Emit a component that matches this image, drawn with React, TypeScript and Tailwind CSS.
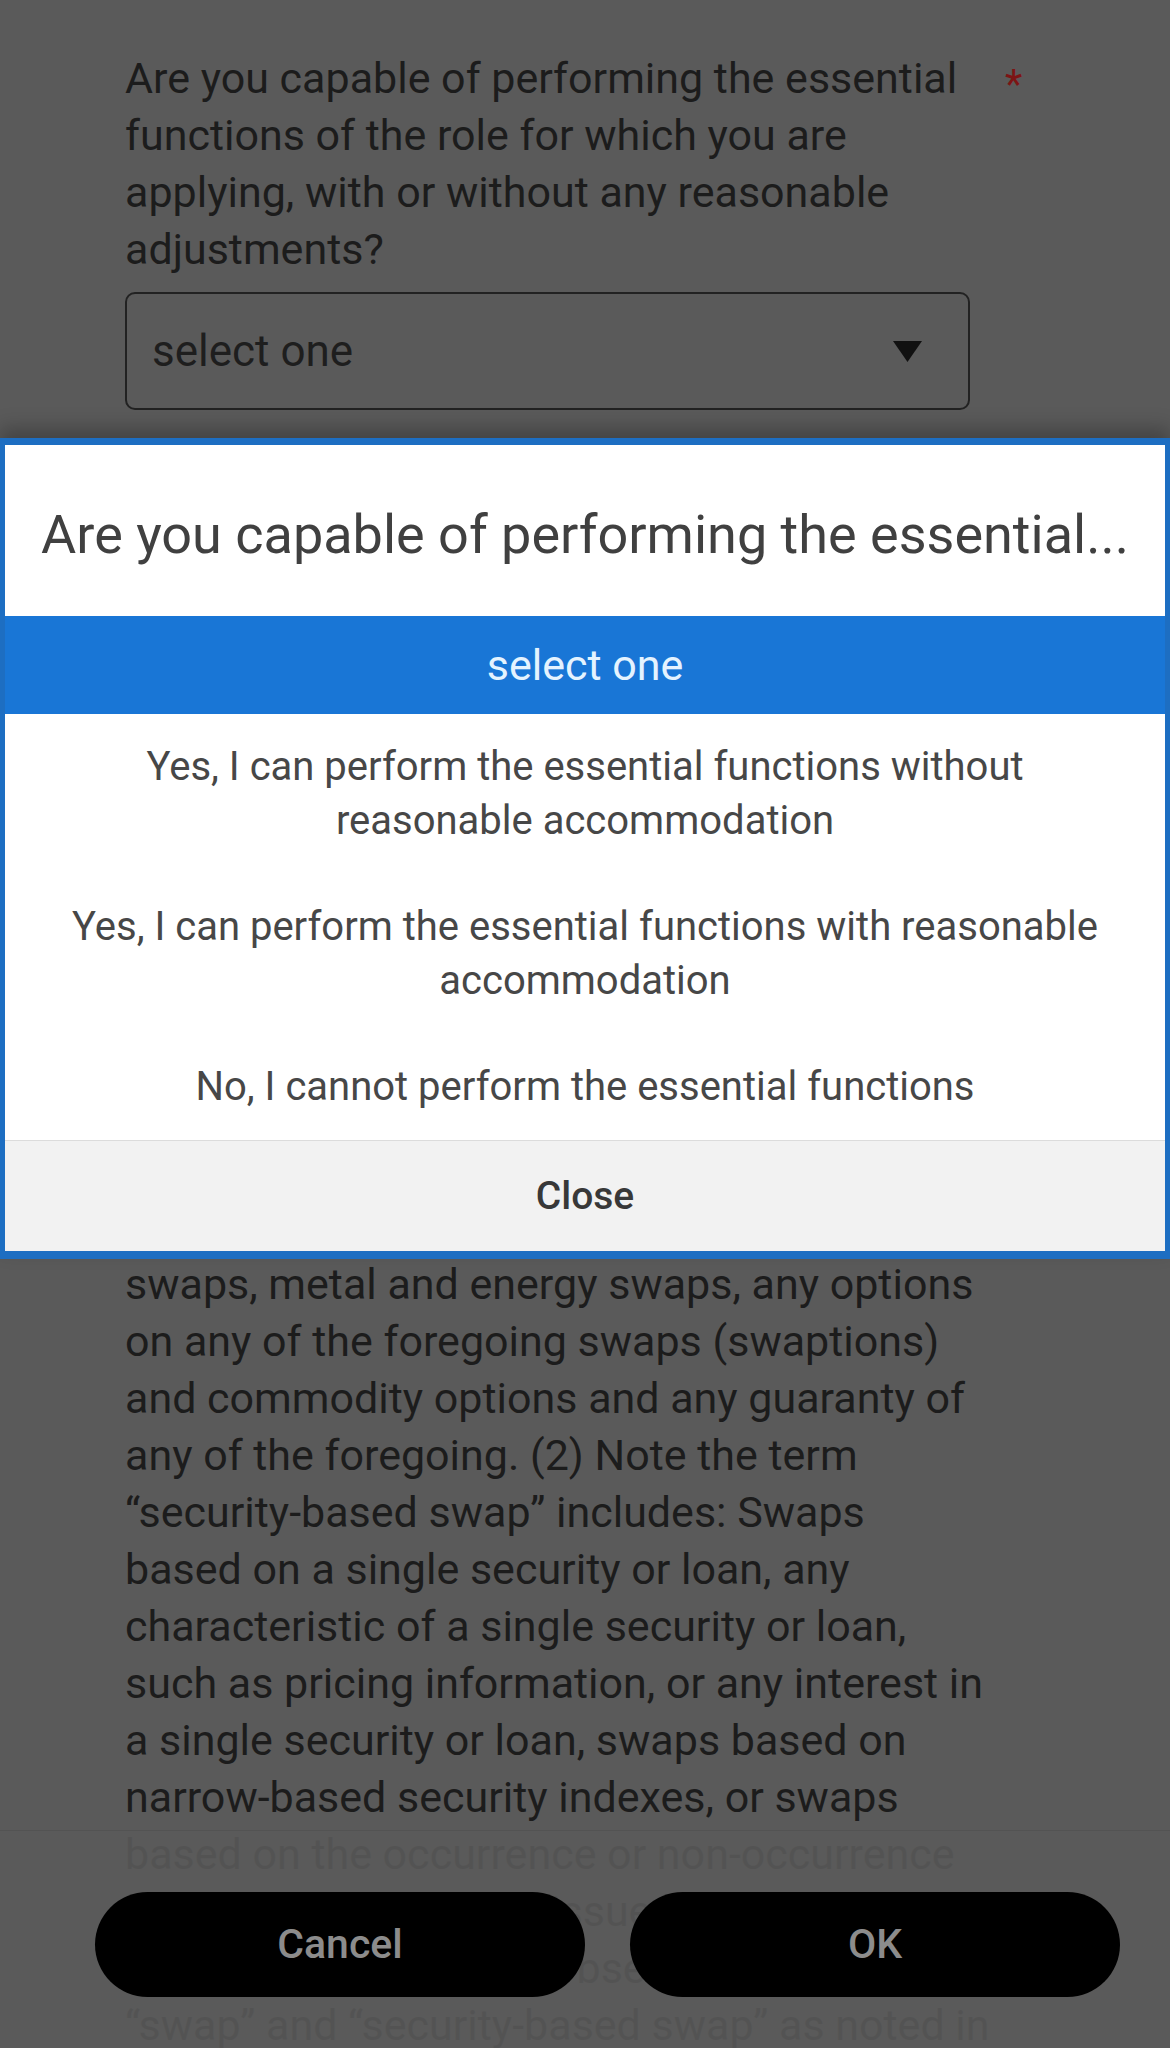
import React from 'react'

const questionLines = [
  'Are you capable of performing the essential',
  'functions of the role for which you are',
  'applying, with or without any reasonable',
  'adjustments?',
]

const bodyLines = [
  'swaps, metal and energy swaps, any options',
  'on any of the foregoing swaps (swaptions)',
  'and commodity options and any guaranty of',
  'any of the foregoing. (2) Note the term',
  '\u201csecurity-based swap\u201d includes: Swaps',
  'based on a single security or loan, any',
  'characteristic of a single security or loan,',
  'such as pricing information, or any interest in',
  'a single security or loan, swaps based on',
  'narrow-based security indexes, or swaps',
  'based on the occurrence or non-occurrence',
  'of an event relating to issuers of securities',
  'in narrow indexes. (3) Observe that both',
  '\u201cswap\u201d and \u201csecurity-based swap\u201d as noted in',
]

const options = [
  ['Yes, I can perform the essential functions without', 'reasonable accommodation'],
  ['Yes, I can perform the essential functions with reasonable', 'accommodation'],
  ['No, I cannot perform the essential functions'],
]

function PickerDialog() {
  return (
    <div className="absolute left-0 right-0 top-[438px] border-x-[5px] border-t-[7px] border-b-[8px] border-[#1d6ec2] bg-white shadow-[0_-10px_18px_rgba(0,0,0,0.25)]">
      <div className="h-[171px] flex items-center justify-center px-4 pt-[8px]">
        <p className="whitespace-nowrap text-[54px] text-[#404040]">
          Are you capable of performing the essential...
        </p>
      </div>
      <div className="h-[98px] flex items-center justify-center bg-[#1976d6]">
        <span className="text-[43px] text-[#e4f3ff]">select one</span>
      </div>
      {options.map((opt, i) => (
        <div key={i} className="py-[26px] flex flex-col items-center text-center text-[40px] leading-[54px] text-[#474747]">
          {opt.map((line) => (
            <span key={line} className="whitespace-nowrap">{line}</span>
          ))}
        </div>
      ))}
      <div className="h-[111px] border-t border-[#dcdcdc] bg-[#f2f2f2] flex items-center justify-center">
        <span className="text-[39px] font-medium text-[#383838]">Close</span>
      </div>
    </div>
  )
}

export default function App() {
  return (
    <div className="relative h-[2048px] overflow-hidden bg-[#5a5a5a] font-['Roboto',sans-serif] text-[#1c1c1c]">
      <div className="pl-[125px] pt-[50px]">
        <div className="flex items-start gap-[10px]">
          <div className="w-[870px] text-[43px] leading-[57px]">
            {questionLines.map((line) => (
              <div key={line} className="whitespace-nowrap">{line}</div>
            ))}
          </div>
          <span className="pt-[6px] text-[40px] leading-[57px] text-[#7d1414]">*</span>
        </div>

        <div className="mt-[14px] w-[845px] h-[118px] rounded-[10px] border-2 border-[#222] flex items-center justify-between pl-[25px] pr-[46px]">
          <span className="text-[44px] text-[#1e1e1e]">select one</span>
          <svg width="29" height="21" viewBox="0 0 29 21">
            <polygon points="0,0 29,0 14.5,21" fill="#111" />
          </svg>
        </div>

        <div className="mt-[846px] text-[43px] leading-[57px]">
          {bodyLines.map((line) => (
            <div key={line} className="whitespace-nowrap">{line}</div>
          ))}
        </div>
      </div>

      <PickerDialog />

      <div className="absolute left-0 right-0 bottom-0 h-[218px] border-t border-[#535353] bg-[#5a5a5a]/90 flex items-center gap-[45px] pl-[95px] pr-[50px] pt-[10px]">
        <button className="flex-1 h-[105px] rounded-full bg-black text-[41px] font-medium text-[#8c8c8c]">
          Cancel
        </button>
        <button className="flex-1 h-[105px] rounded-full bg-black text-[41px] font-medium text-[#8c8c8c]">
          OK
        </button>
      </div>
    </div>
  )
}
